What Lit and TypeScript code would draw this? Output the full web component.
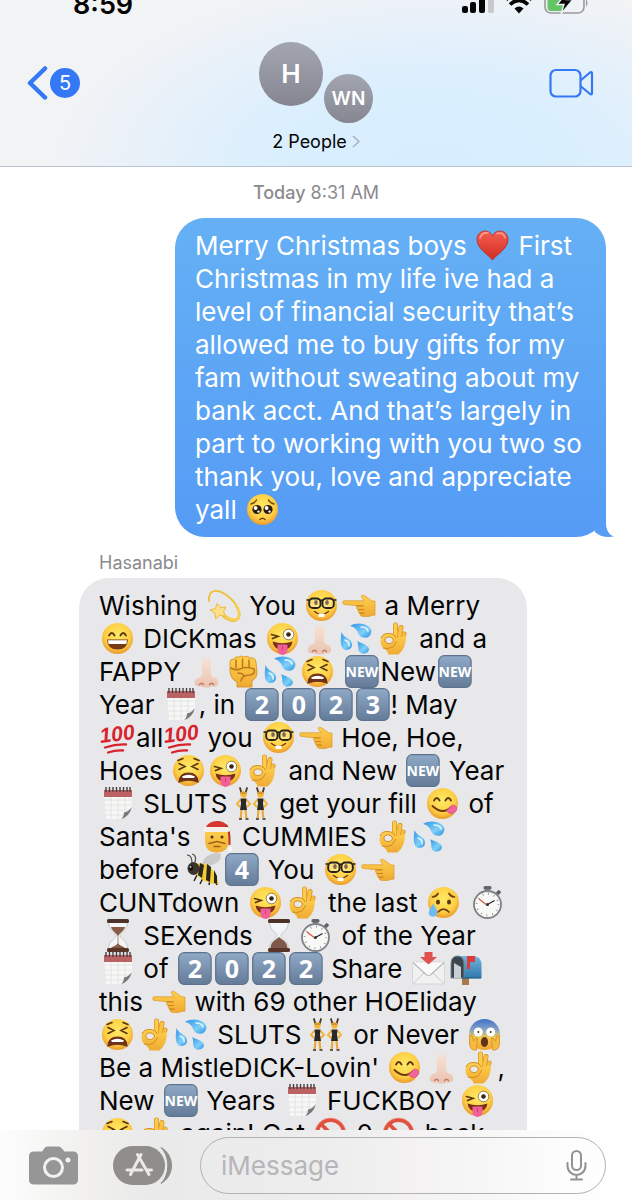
import { LitElement, html, svg, css, type SVGTemplateResult } from "lit";
import { customElement, property } from "lit/decorators.js";

const eyes = svg`<ellipse cx="13" cy="13.5" rx="1.8" ry="2.6" fill="#5a3510"/><ellipse cx="24" cy="13.5" rx="1.8" ry="2.6" fill="#5a3510"/>`;
const arcEyes = svg`<path d="M10 13.5q2.8-5 5.6 0M21.4 13.5q2.8-5 5.6 0" fill="none" stroke="#5a3510" stroke-width="1.8" stroke-linecap="round"/>`;
const disc = svg`<circle cx="18.5" cy="16.5" r="15.5" fill="url(#face)"/>`;

const key = svg`<rect x="2.7" y=".7" width="32.4" height="31.8" rx="5.5" fill="url(#key)" stroke="#5c718c" stroke-width="1.2"/>`;

const keycap = (digit: string) => svg`${key}
  <text x="18.9" y="25.5" text-anchor="middle" font-family="Open Sans, sans-serif" font-weight="700" font-size="25" fill="#fff">${digit}</text>`;

const hourglass = (sandTop: boolean) => svg`
  <path d="M9.500 3C9.500 12 17 13 17 16.500S9.500 21 9.500 30H28.500C28.500 21 21 20 21 16.500S28.500 12 28.500 3Z" fill="#f3f5f6" stroke="#b9bec4" stroke-width=".8"/>
  ${sandTop
    ? svg`<path d="M12 8C13 12 17 13.500 19 17 21 13.500 25 12 26 8Z" fill="#875b45"/><path d="M19 16v10" stroke="#a07058" stroke-width=".8"/><path d="M12 29C14 27 18 26.500 19 24 20 26.500 24 27 26 29Z" fill="#875b45"/>`
    : svg`<path d="M10.500 29C11 22 16 21 19 18 22 21 27 22 27.500 29Z" fill="#80584a"/>`}
  <rect x="8" y="0" width="22" height="4" rx="1.500" fill="#4d3229"/><rect x="8" y="29" width="22" height="4" rx="1.500" fill="#5a3429"/>`;

const dancer = svg`
  <path d="M5 1l1.500 5M12 1l-1.500 5" stroke="#4a3426" stroke-width="1.800" stroke-linecap="round"/>
  <circle cx="8.500" cy="7.500" r="3.200" fill="#f5b93a"/><path d="M5.400 7q3-5 6.200 0" fill="#d8902a"/>
  <path d="M5.500 12.500L2 17l3 3M11.500 12.500L15 17l-3 3" fill="none" stroke="#f2b437" stroke-width="2"/>
  <path d="M5.500 11.500h6l-.5 5 1 6.500h-7l1-6.500z" fill="#2b2826"/>
  <path d="M6.500 23l-.8 8M10.500 23l.8 8" stroke="#e8aa38" stroke-width="2.200"/>
  <path d="M4 32h3M10.500 32h3" stroke="#3a2a20" stroke-width="1.600"/>`;

const EMOJI: Record<string, SVGTemplateResult> = {
  "❤️": svg`<path d="M18.500 31C15 26 3 20 3 10.500 3 1 15-1 18.500 7 22-1 34 1 34 10.500 34 20 22 26 18.500 31Z" fill="url(#heart)" stroke="#b8281f" stroke-width=".8"/><path d="M6 9q2-6 8-5M23 4.500q6-2 8 4" stroke="#ff9d8c" stroke-width="1.600" fill="none" stroke-linecap="round"/>`,
  "🥺": svg`${disc}<circle cx="13" cy="16.500" r="4.600" fill="#2e1c10"/><circle cx="24" cy="16.500" r="4.600" fill="#2e1c10"/><circle cx="11.600" cy="15" r="1.900" fill="#fff"/><circle cx="22.600" cy="15" r="1.900" fill="#fff"/><circle cx="14.500" cy="18.600" r="1.200" fill="#fff"/><circle cx="25.500" cy="18.600" r="1.200" fill="#fff"/><path d="M7 11q4-1 5.500-4M30 11q-4-1-5.500-4M16 26.500q2.500-2.500 5 0" fill="none" stroke="#70440f" stroke-width="1.400" stroke-linecap="round"/>`,
  "💫": svg`<path d="M4 12C3-1 14-1 25 9S38 31 29 32C25 32 21 30 18 27.500" fill="none" stroke="#edbf3d" stroke-width="1.800" stroke-linecap="round"/><path d="M30 15C36 24 35 30 30 30.500S21 28 19 26" fill="none" stroke="#f7cf52" stroke-width="2.600"/><path d="M12 14.500l3.500 4 5.500-.5-2.500 4.500 2.500 5-6-1.500-4.500 4-.5-6-5-3 5.500-1.500z" fill="#fbe08a" stroke="#eeb93b" stroke-width="1"/>`,
  "🤓": svg`${disc}${eyes}<rect x="6.200" y="9.500" width="11.300" height="9.500" rx="3.600" fill="#fff" fill-opacity=".25" stroke="#27221e" stroke-width="1.900"/><rect x="19.500" y="9.500" width="11.300" height="9.500" rx="3.600" fill="#fff" fill-opacity=".25" stroke="#27221e" stroke-width="1.900"/><path d="M17 12q1.500-1.500 3 0M3.500 11h3M30.500 11h3" stroke="#27221e" stroke-width="1.700" fill="none"/><path d="M11.500 22.500q7 6 14 0" fill="none" stroke="#7a3d10" stroke-width="1.600" stroke-linecap="round"/><rect x="15.500" y="24.500" width="6" height="3.600" rx=".8" fill="#fff"/>`,
  "👈": svg`<path d="M3.500 11.800q-1.800 1.800 0 3.500l13.500 1.500c-1 1.800 0 3.400 1.200 3.700-.5 2 .3 3.400 1.700 3.700-.2 2 1 3.100 3 3.200h6c1.500 0 2-1.200 3.500-1.200H35V12h-3l-7-5c-2.500-1.500-4.500-.5-3.500 1l2.500 3.800z" fill="url(#hand)" stroke="#dc9625" stroke-width=".7"/><path d="M17 16.800h6M18.200 20.500h5.300M20 24.200h4" stroke="#c9831d" stroke-width="1.200" stroke-linecap="round"/>`,
  "😄": svg`${disc}${arcEyes}<path d="M8 17.500h21q-.5 10-10.500 10T8 17.500z" fill="#7a3a16"/><path d="M9 18.200h19l-.6 3.800H9.600z" fill="#fff"/>`,
  "😜": svg`${disc}<path d="M7.500 12.500l6.500 1.800-5.500 2.200" stroke="#5a3510" stroke-width="1.700" fill="none" stroke-linecap="round"/><circle cx="24.500" cy="12.500" r="5.300" fill="#fff" stroke="#7b633e" stroke-width=".8"/><circle cx="24.500" cy="12.500" r="2.300" fill="#3d2510"/><path d="M8.500 19.500q10 3.500 20 0-1 8-10 8t-10-8z" fill="#7a2f16"/><path d="M13.500 22.500h10v5.500a5 5 0 0 1-10 0z" fill="#f05f98"/><path d="M18.500 24v4" stroke="#cd3c78" stroke-width="1"/>`,
  "👃🏻": svg`<path d="M14 1h9v17c0 2.500 1 4 3 4.500 3.500 1 4.500 3.500 4.200 6-.5 3-3.500 3.300-6.200 2.700-2 1.800-9 1.800-11 0-2.700.6-5.700.3-6.200-2.700-.3-2.500.7-5 4.200-6 2-.5 3-2 3-4.500z" fill="url(#nose)"/><path d="M11.500 29.500q2-2.500 4 0M21.500 29.500q2-2.500 4 0" stroke="#b87b68" stroke-width="1.400" fill="none" stroke-linecap="round"/>`,
  "💦": svg`<path d="M12 4C20-1 32 2 33.500 9 33 17 24 18 20.500 12 19 8 17 5 12 4Z" fill="url(#water)"/><path d="M3.500 10C3 17 1 25 7 28 14 29 16 22 12 18 8 15 5 14 3.500 10Z" fill="url(#water)"/><path d="M19 19C22 21 30 22 31 27 31 32 22 34 20.500 28 20 25 20.500 21 19 19Z" fill="url(#water)"/><path d="M23 5q6 0 7 4M7 18q5 2 4 6" stroke="#fff" stroke-opacity=".8" stroke-width="1.600" fill="none" stroke-linecap="round"/>`,
  "👌": svg`<g fill="none" stroke-linecap="round"><path d="M24.500 22L29 12" stroke="#d28c22" stroke-width="5"/><path d="M24.500 22L29 12" stroke="#f6bb40" stroke-width="3.800"/><path d="M23 22L26 5.500" stroke="#d28c22" stroke-width="5"/><path d="M23 22L26 5.500" stroke="#f9c244" stroke-width="3.800"/><path d="M20.500 20V3" stroke="#d28c22" stroke-width="5"/><path d="M20.500 20V3" stroke="#fdca4a" stroke-width="3.800"/></g><path fill-rule="evenodd" d="M6 16Q8 11 14 11.500T22 16L31 14Q31 27 23.500 32.500H13.500Q13 29 8 26 4.500 22 6 16ZM10 17.500Q9.500 21 13.500 21.500T18.500 18Q17.500 15 14 14.800T10 17.500Z" fill="url(#hand)"/><path d="M6 16Q8 11 14 11.500T21 16M8 26q5 1.500 10-1l4-6M10 17.500Q9.500 21 13.500 21.500T18.500 18Q17.500 15 14 14.800T10 17.500Z" fill="none" stroke="#d28c22" stroke-width="1"/>`,
  "✊": svg`<path d="M5 7q0-3 4-3 1-3 5-2 2-2 5.500 0 3-2 5.500 1 5-1 6 4l1 10q0 6-5 9v6H12v-5c-5-2-7-7-7-12z" fill="url(#hand)" stroke="#d28a20" stroke-width=".8"/><path d="M11 5v8M17.500 4v9M24 5v8M6 13q5 3 9 1 6-3 14 0 2 5-4 6-8 0-9 6M13 18q5 0 6 3" stroke="#b9771b" stroke-width="1.500" fill="none" stroke-linecap="round"/>`,
  "😫": svg`${disc}<path d="M9 9.500l6 3-6 3M28 9.500l-6 3 6 3M8 6.500l5-2M29 6.500l-5-2" stroke="#5a3510" stroke-width="1.600" fill="none" stroke-linecap="round"/><path d="M9 28q.5-9 9.500-9t9.500 9q-9.500-3.500-19 0z" fill="#6e321b" stroke="#6e321b" stroke-width="1.200"/><path d="M12 22.500q6.500-3.500 13 0l-1 1.500H13z" fill="#fff"/>`,
  "🆕": svg`${key}<text x="18.900" y="21.500" text-anchor="middle" font-family="Liberation Sans Narrow, Open Sans, sans-serif" font-weight="700" font-size="14" fill="#fff">NEW</text>`,
  "🗓️": svg`<path d="M5 3h28v19l-9 10H7z" fill="#f7f7f6"/><path d="M5 13h28M5.500 18h27M6 23h26M6.500 28h20M12 9v23M19 9v23M26 9v20" stroke="#dedfdf" stroke-width=".8"/><path d="M5 3h28v7H5z" fill="#bd6264"/><path d="M22 32q8-2 11-12-4 5-8 5.500 0 4-3 6.500z" fill="#77797b"/><path d="M7 0v5M10.500 0v5M14 0v5M17.500 0v5M21 0v5M24.500 0v5M28 0v5M31 0v5" stroke="#46413f" stroke-width="1.400"/>`,
  "2️⃣": keycap("2"),
  "0️⃣": keycap("0"),
  "3️⃣": keycap("3"),
  "4️⃣": keycap("4"),
  "💯": svg`<text x="18.500" y="20" transform="rotate(-7 18 17)" text-anchor="middle" font-family="Liberation Sans Narrow, Liberation Sans, sans-serif" font-style="italic" font-weight="700" font-size="21" fill="#d8232e">100</text><path d="M6 26.500q11-3.500 21-3M9 31.500q8-2.500 15-2" stroke="#d8232e" stroke-width="2.300" fill="none" stroke-linecap="round"/>`,
  "👯": svg`${dancer}<g transform="translate(17 0)">${dancer}</g>`,
  "😋": svg`${disc}${arcEyes}<path d="M8.500 19q10 9.500 19 1" fill="none" stroke="#6e3a10" stroke-width="1.900" stroke-linecap="round"/><path d="M22.500 23.500l6-5.500c4 0 5.500 4 3 6.500s-6 3-9-1z" fill="#f0669c" stroke="#cf4278" stroke-width=".7"/>`,
  "🎅": svg`<path d="M7 10h24v12q-1 10-12 10.500T7 22z" fill="url(#hand)"/><path d="M7.500 9C9-1 28-2 31 9z" fill="#d5382f"/><path d="M28 5q4 4 3.500 20" stroke="#b92f29" stroke-width="2" fill="none"/><rect x="5" y="7" width="27" height="5" rx="2.500" fill="#f3f0ee"/><circle cx="32" cy="29" r="2.500" fill="#f7f5f3"/><circle cx="14" cy="17" r="1.500" fill="#51310f"/><circle cx="24" cy="17" r="1.500" fill="#51310f"/><path d="M11 23.500q4-1 8-2 4 1 8 2M16 26.500h6" stroke="#9b6413" stroke-width="1.300" fill="none" stroke-linecap="round"/>`,
  "🐝": svg`<path d="M16 11C18 2 29-2 35 1c1 7-6 11-14 12z" fill="#c3c5c4" fill-opacity=".85"/><path d="M6 10Q6 2 1 2M9 9q2-7-3-8" stroke="#4a4744" stroke-width="1.200" fill="none"/><path d="M11 22l-3 6M17 25l-3 6M24 27l-1 5M29 27l2 5" stroke="#28231d" stroke-width="1.500"/><path d="M10 12C17 7 28 12 33 31 24 31 13 27 10 20Z" fill="#f3ce33"/><path d="M14 10l4 2-2 13-4-3zM21 11l4 3-1 15-4-2zM28 17l3 6v8l-3-1z" fill="#29241f"/><ellipse cx="7.500" cy="15.500" rx="6" ry="6.500" fill="#3d352b"/><ellipse cx="5" cy="15" rx="2.200" ry="3" fill="#171412"/><circle cx="4.500" cy="13.800" r=".9" fill="#fff"/>`,
  "😥": svg`${disc}<ellipse cx="13" cy="16" rx="2" ry="2.500" fill="#5a3510"/><ellipse cx="24" cy="16" rx="2" ry="2.500" fill="#5a3510"/><path d="M7.500 11q4-.5 5.500-3.500M29.500 11q-4-.5-5.500-3.500M13 26q5.500-5.500 11 0" stroke="#6e3f10" stroke-width="1.700" fill="none" stroke-linecap="round"/><path d="M8 17.500c2.500 4 4.500 6.500 4.300 9.500-.5 5-8.500 5-8.600 0 0-3 2.300-5.500 4.300-9.500z" fill="#6cbcf2"/>`,
  "⏱️": svg`<path d="M28 8l3-3" stroke="#5e6266" stroke-width="3.500"/><rect x="16" y="1" width="5" height="6" fill="#85898d"/><rect x="14.500" y="0" width="8" height="3.500" rx="1.500" fill="#63676b"/><circle cx="18.500" cy="18.500" r="13.500" fill="#f8f8f7" stroke="#7e8387" stroke-width="1.800"/><circle cx="18.500" cy="18.500" r="10.800" fill="none" stroke="#777" stroke-width="2" stroke-dasharray=".7 5"/><path d="M18.500 18.500l7-4" stroke="#25282b" stroke-width="1.300"/><path d="M18.500 19.500L10 13" stroke="#db4b3c" stroke-width="1.100"/><circle cx="18.500" cy="18.500" r="1.500" fill="#333"/>`,
  "⏳": hourglass(true),
  "⌛": hourglass(false),
  "📩": svg`<rect x="2.500" y="10" width="32" height="22" rx="1.500" fill="#f1f1f2" stroke="#cfcfd2" stroke-width=".8"/><path d="M3 31.500L15 20M34 31.500L22 20" stroke="#c9c9cd" stroke-width="1"/><path d="M3 10.500l13 12q2.500 2 5 0l13-12" fill="#fafafa" stroke="#b9b9be" stroke-width="1.200"/><path d="M14.500 0h8v5h4.500l-8.500 7.500L10 5h4.500z" fill="#e0524f"/>`,
  "📬": svg`<rect x="15" y="24" width="7" height="9" fill="#a9794b"/><path d="M10 4h17q7 1 7.500 8v14H10z" fill="url(#mail)"/><path d="M4 26V12q0-8 6.500-8T17 12v14z" fill="#3b454d" stroke="#738592" stroke-width="1"/><path d="M7 11l7 4v11H7z" fill="#c8ced2"/><path d="M20 17V4h8v6h-5v7z" fill="#dd3b35"/><path d="M15 26h19" stroke="#235c86" stroke-width="1.200"/>`,
  "😱": svg`<circle cx="18.500" cy="16.500" r="15.500" fill="url(#scare)"/><circle cx="12.300" cy="14" r="4.500" fill="#fff"/><circle cx="24.700" cy="14" r="4.500" fill="#fff"/><circle cx="12.300" cy="14" r="1" fill="#40311f"/><circle cx="24.700" cy="14" r="1" fill="#40311f"/><ellipse cx="18.500" cy="24" rx="3.600" ry="5" fill="#633019"/><path d="M3.500 18q2-2 3 1l1 4q2-4 4-3l-1 12q-7 1-7-7zM33.500 18q-2-2-3 1l-1 4q-2-4-4-3l1 12q7 1 7-7z" fill="#f6bb3e" stroke="#d18c26" stroke-width=".8"/>`,
  "🚫": svg`<circle cx="18.500" cy="16.500" r="13.500" fill="none" stroke="#e0503f" stroke-width="3.800"/><path d="M9 7l19 19" stroke="#e0503f" stroke-width="3.800"/><circle cx="18.500" cy="16.500" r="15.500" fill="none" stroke="#f5937f" stroke-width=".7"/>`,
};

const EMOJI_PATTERN = new RegExp(`(${Object.keys(EMOJI).join("|")})`, "u");

const renderLine = (line: string) =>
  line.split(EMOJI_PATTERN).map((part) =>
    EMOJI[part]
      ? html`<svg class="emoji" viewBox="0 0 37 33" role="img" aria-label=${part}>${EMOJI[part]}</svg>`
      : part
  );

@customElement("chat-bubble")
export class ChatBubble extends LitElement {
  @property({ attribute: false }) lines: string[] = [];
  @property({ type: Boolean, reflect: true }) sent = false;

  static styles = css`
    :host {
      display: block;
      position: relative;
      padding: 11px 20px;
      border-radius: 30px;
      background: #e8e8ea;
      color: #050505;
      font-size: 26px;
      line-height: 33px;
      width: 408px;
    }
    :host([sent]) {
      width: 391px;
      background: linear-gradient(#65b0f5, #559bf5);
      color: #fff;
    }
    .line {
      display: block;
      white-space: nowrap;
      height: 33px;
    }
    .emoji {
      display: inline-block;
      width: 37px;
      height: 33px;
      overflow: visible;
      vertical-align: top;
    }
    .defs {
      position: absolute;
      width: 0;
      height: 0;
    }
    .tail {
      position: absolute;
      right: -8px;
      bottom: 0;
      width: 22px;
      height: 34px;
    }
  `;

  render() {
    return html`
      <svg class="defs" aria-hidden="true">
        <defs>
          <radialGradient id="face" cx=".5" cy=".4" r=".62">
            <stop offset="0" stop-color="#ffea65" /><stop offset=".65" stop-color="#fdcf45" /><stop offset="1" stop-color="#e9952a" />
          </radialGradient>
          <linearGradient id="scare" x2="0" y2="1">
            <stop offset="0" stop-color="#416fc9" /><stop offset=".35" stop-color="#86a3c6" /><stop offset=".6" stop-color="#f6cb50" /><stop offset="1" stop-color="#efa531" />
          </linearGradient>
          <linearGradient id="key" x2="0" y2="1"><stop offset="0" stop-color="#8fa9c7" /><stop offset="1" stop-color="#647b98" /></linearGradient>
          <linearGradient id="heart" x2="0" y2="1"><stop offset="0" stop-color="#f4604f" /><stop offset="1" stop-color="#d22c22" /></linearGradient>
          <linearGradient id="hand" x2="0" y2="1"><stop offset="0" stop-color="#ffd04d" /><stop offset="1" stop-color="#efaa33" /></linearGradient>
          <linearGradient id="nose" x2="0" y2="1"><stop offset="0" stop-color="#f2d9cc" stop-opacity="0" /><stop offset=".25" stop-color="#f6dccd" /><stop offset="1" stop-color="#ebc2b0" /></linearGradient>
          <linearGradient id="water" x2="1" y2="1"><stop offset="0" stop-color="#2d93e6" /><stop offset=".6" stop-color="#7fd0f8" /><stop offset="1" stop-color="#2b8fe2" /></linearGradient>
          <linearGradient id="mail" x2="0" y2="1"><stop offset="0" stop-color="#6fb4dd" /><stop offset="1" stop-color="#2f79ac" /></linearGradient>
        </defs>
      </svg>
      ${this.lines.map((line) => html`<span class="line">${renderLine(line)}</span>`)}
      ${this.sent
        ? html`<svg class="tail" viewBox="0 0 22 34" aria-hidden="true">
            <path d="M14 0V20C14 27 17 32 22 33.500 14 35 7 33 3 29L0 20Z" fill="#569df5" />
          </svg>`
        : ""}
    `;
  }
}

const SENT = [
  "Merry Christmas boys ❤️ First",
  "Christmas in my life ive had a",
  "level of financial security that’s",
  "allowed me to buy gifts for my",
  "fam without sweating about my",
  "bank acct. And that’s largely in",
  "part to working with you two so",
  "thank you, love and appreciate",
  "yall 🥺",
];

const RECEIVED = [
  "Wishing 💫 You 🤓👈 a Merry",
  "😄 DICKmas 😜👃🏻💦👌 and a",
  "FAPPY 👃🏻✊💦😫 🆕New🆕",
  "Year 🗓️, in 2️⃣0️⃣2️⃣3️⃣! May",
  "💯all💯 you 🤓👈 Hoe, Hoe,",
  "Hoes 😫😜👌 and New 🆕 Year",
  "🗓️ SLUTS 👯 get your fill 😋 of",
  "Santa's 🎅 CUMMIES 👌💦",
  "before 🐝4️⃣ You 🤓👈",
  "CUNTdown 😜👌 the last 😥 ⏱️",
  "⏳ SEXends ⌛⏱️ of the Year",
  "🗓️ of 2️⃣0️⃣2️⃣2️⃣ Share 📩📬",
  "this 👈 with 69 other HOEliday",
  "😫👌💦 SLUTS 👯 or Never 😱",
  "Be a MistleDICK-Lovin' 😋👃🏻👌,",
  "New 🆕 Years 🗓️ FUCKBOY 😜",
  "😫👌 again! Get 🚫 0 🚫 back",
];

@customElement("app-root")
export class AppRoot extends LitElement {
  static styles = css`
    :host {
      display: flex;
      flex-direction: column;
      height: 100vh;
      overflow: hidden;
      background: #fff;
      font-family: Inter, "Liberation Sans", sans-serif;
      color: #050505;
    }
    svg {
      display: block;
    }
    button {
      display: flex;
      align-items: center;
      padding: 0;
      border: 0;
      background: none;
      font: inherit;
      color: inherit;
    }
    header {
      flex: none;
      border-bottom: 1px solid #b9c4d0;
      background: radial-gradient(ellipse 60% 115% at 68% 100%, #d7eefe 0%, #dbeffe 45%, #f2f3f5 100%);
    }
    .status {
      display: flex;
      align-items: flex-end;
      height: 21px;
      padding: 0 42px 0 73px;
    }
    .time {
      flex: 1;
      font-size: 27px;
      line-height: 32px;
      font-weight: 600;
    }
    .indicators {
      display: flex;
      padding-bottom: 7px;
    }
    .nav {
      display: grid;
      grid-template-columns: 1fr auto 1fr;
      padding: 21px 38px 14px 26px;
    }
    .back {
      justify-self: start;
      align-self: start;
      gap: 2px;
      margin-top: 24px;
      color: #3478f6;
    }
    .count {
      width: 30px;
      border-radius: 15px;
      background: #3478f6;
      color: #fff;
      font-size: 20px;
      line-height: 30px;
      text-align: center;
    }
    .people {
      flex-direction: column;
      gap: 8px;
      margin-left: 12px;
    }
    .avatars {
      display: flex;
      gap: 1px;
    }
    .avatar {
      width: 64px;
      height: 64px;
      border-radius: 50%;
      background: linear-gradient(#a3a6b2, #858690);
      color: #fff;
      font-size: 26px;
      line-height: 64px;
      font-weight: 600;
      text-align: center;
    }
    .small {
      width: 49px;
      height: 49px;
      margin-top: 32px;
      font-size: 19px;
      line-height: 49px;
    }
    .names {
      display: flex;
      align-items: center;
      gap: 5px;
      font-size: 18px;
      line-height: 21px;
    }
    .video {
      justify-self: end;
      align-self: start;
      margin-top: 25px;
    }
    main {
      flex: 1;
      min-height: 0;
      overflow: hidden;
      display: flex;
      flex-direction: column;
      padding: 15px 26px 0 79px;
    }
    .stamp {
      margin: 0 0 15px;
      padding-right: 53px;
      align-self: center;
      color: #8a8a8e;
      font-size: 18px;
      line-height: 21px;
    }
    .stamp b {
      font-weight: 500;
    }
    .sent {
      align-self: flex-end;
    }
    .sender {
      margin: 16px 0 5px;
      padding-left: 20px;
      color: #8a8a8e;
      font-size: 18px;
      line-height: 20px;
    }
    footer {
      flex: none;
      display: flex;
      align-items: center;
      padding: 7px 26px 6px 29px;
      background: linear-gradient(90deg, #fdfdfd 0%, #f1f0ee 14%, #eaeaea 24%, #ededee 50%, #f3f1f2 64%, #fdfdfd 90%, #fff 100%);
    }
    .apps {
      margin: 0 27px 0 35px;
    }
    .field {
      flex: 1;
      min-width: 0;
      display: flex;
      align-items: center;
      height: 57px;
      box-sizing: border-box;
      padding: 0 18px 0 20px;
      border: 1px solid #b2b2b4;
      border-radius: 29px;
    }
    .field input {
      flex: 1;
      min-width: 0;
      padding: 0;
      border: 0;
      outline: 0;
      background: none;
      font: inherit;
      font-size: 26px;
      line-height: 33px;
    }
    .field input::placeholder {
      color: #b6b6b9;
      opacity: 1;
    }
  `;

  render() {
    return html`
      <header>
        <div class="status">
          <span class="time">8:59</span>
          <span class="indicators">
            <svg width="130" height="24" viewBox="0 0 130 24" aria-hidden="true">
              <rect x="2" y="16" width="6" height="7" rx="2" fill="#050505" />
              <rect x="10" y="12" width="6" height="11" rx="2" fill="#050505" />
              <rect x="19" y="7" width="6" height="16" rx="2" fill="#050505" />
              <rect x="28" y="2" width="6" height="21" rx="2" fill="#c8c9cd" />
              <path d="M46 9.500Q59 -3 72 9.500" stroke="#050505" stroke-width="4" fill="none" />
              <path d="M50 14.500Q59 6 68 14.500" stroke="#050505" stroke-width="3.600" fill="none" />
              <path d="M54.500 18.500Q59 14.500 63.500 18.500L59 23.500Z" fill="#050505" />
              <rect x="85" y="1" width="39" height="22" rx="6" fill="none" stroke="#98999d" stroke-width="1.600" />
              <path d="M87.500 3H104V21H91Q87.500 21 87.500 17Z" fill="#65c466" />
              <path d="M126 9q3 4 0 8z" fill="#98999d" />
              <path d="M109 0L97 14.500H104L101 24 113 9.500H106.500Z" fill="#050505" stroke="#eef1f6" stroke-width="1.400" />
            </svg>
          </span>
        </div>
        <div class="nav">
          <button class="back" aria-label="Back, 5 unread">
            <svg width="22" height="34" viewBox="0 0 22 34" fill="none" stroke="#3478f6" stroke-width="4.500" stroke-linecap="round" stroke-linejoin="round">
              <path d="M19 2.500L4 17 19 31.500" />
            </svg>
            <span class="count">5</span>
          </button>
          <button class="people">
            <span class="avatars"><span class="avatar">H</span><span class="avatar small">WN</span></span>
            <span class="names">2 People
              <svg width="8" height="13" viewBox="0 0 8 13" fill="none" stroke="#a7b1bc" stroke-width="1.500"><path d="M1 1l6 5.500L1 12" /></svg>
            </span>
          </button>
          <button class="video" aria-label="Video call">
            <svg width="45" height="32" viewBox="0 0 45 32" fill="none" stroke="#3478f6" stroke-width="2.200" stroke-linejoin="round">
              <rect x="1.500" y="3" width="30" height="26.500" rx="5.500" />
              <path d="M31.500 13.500L41 5.500Q43 4.500 43 6.500V26Q43 28 41 27L31.500 19" />
            </svg>
          </button>
        </div>
      </header>
      <main>
        <p class="stamp"><b>Today</b> 8:31 AM</p>
        <chat-bubble class="sent" sent .lines=${SENT}></chat-bubble>
        <p class="sender">Hasanabi</p>
        <chat-bubble .lines=${RECEIVED}></chat-bubble>
      </main>
      <footer>
        <button aria-label="Camera">
          <svg width="49" height="39" viewBox="0 0 49 39">
            <path d="M5 5.500h8L16 1.500Q17 .5 19 .5H29Q31 .5 32 1.500L35.500 5.500H44Q49 5.500 49 10.500V33.500Q49 38.500 44 38.500H5Q0 38.500 0 33.500V10.500Q0 5.500 5 5.500Z" fill="#969696" />
            <circle cx="24.500" cy="21.500" r="9" fill="none" stroke="#f3f2f1" stroke-width="3" />
            <circle cx="39" cy="14" r="2.500" fill="#f3f2f1" />
          </svg>
        </button>
        <button class="apps" aria-label="Apps">
          <svg width="60" height="39" viewBox="0 0 60 39">
            <rect width="52" height="39" rx="19.500" fill="#8f8e8b" />
            <path d="M44 1C57 7 57 32 44 38" fill="none" stroke="#eceae8" stroke-width="2" />
            <path d="M48 1.500C62 9 62 30 48 37.500 57 28 57 11 48 1.500Z" fill="#8f8e8b" stroke="#8f8e8b" stroke-width="1" />
            <path d="M28 8.500L17.500 28.500M24.500 8.500L36 28.500M14 24H29M34.500 24H38.500" fill="none" stroke="#eceae8" stroke-width="3" stroke-linecap="round" />
          </svg>
        </button>
        <label class="field">
          <input type="text" placeholder="iMessage" aria-label="iMessage" />
          <button aria-label="Dictate">
            <svg width="21" height="31" viewBox="0 0 21 31" fill="none" stroke="#929294" stroke-width="2" stroke-linecap="round">
              <rect x="6" y="1" width="9" height="19" rx="4.500" />
              <path d="M1.500 13V15.500C1.500 28 19.500 28 19.500 15.500V13M10.500 25V29.500M5 29.500H16" />
            </svg>
          </button>
        </label>
      </footer>
    `;
  }
}
